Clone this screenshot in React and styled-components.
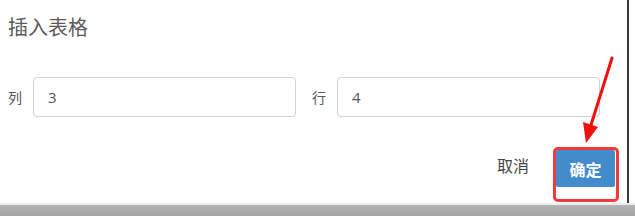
import React from 'react'
import styled, { createGlobalStyle } from 'styled-components'

const Global = createGlobalStyle`
  html, body {
    margin: 0;
    padding: 0;
    background: #fff;
  }
  body {
    font-family: "Open Sans", "Noto Sans CJK SC", sans-serif;
    color: #555;
  }
`

const Frame = styled.div`
  position: relative;
  width: 635px;
  height: 216px;
  display: flex;
  flex-direction: column;
  overflow: hidden;
`

const Dialog = styled.div`
  width: 629px;
  flex: 1;
  border-right: 2px solid #3a3a3a;
  display: flex;
  flex-direction: column;
  box-sizing: border-box;
`

const Header = styled.div`
  height: 52px;
  padding-left: 8px;
  display: flex;
  align-items: center;
`

const Title = styled.h4`
  margin: 0;
  font-family: "Noto Sans CJK SC", sans-serif;
  font-size: 20px;
  font-weight: 400;
  color: #5a5a5a;
`

const Body = styled.div`
  margin-top: 25px;
  padding-left: 8px;
  display: flex;
  gap: 16px;
`

const Field = styled.label`
  display: flex;
  align-items: center;
  gap: 11px;
`

const Label = styled.span`
  font-family: "Noto Sans CJK SC", sans-serif;
  font-size: 14px;
  color: #555;
`

const Input = styled.input`
  width: 263px;
  height: 40px;
  box-sizing: border-box;
  border: 1px solid #d2d2d2;
  border-radius: 4px;
  padding: 0 14px;
  font-family: "Open Sans", sans-serif;
  font-size: 15px;
  color: #555;
  outline: none;
`

const Footer = styled.div`
  margin-top: 33px;
  padding-right: 12px;
  display: flex;
  justify-content: flex-end;
  align-items: flex-start;
  gap: 27px;
`

const Button = styled.button`
  height: 37px;
  width: ${p => (p.$primary ? '59px' : 'auto')};
  border: none;
  border-radius: 2px;
  font-family: "Noto Sans CJK SC", sans-serif;
  font-size: 16px;
  line-height: 1;
  cursor: pointer;
  padding: 0;
  padding-top: ${p => (p.$primary ? '0' : '0')};
  margin-top: ${p => (p.$primary ? '0' : '-4px')};
  background: ${p => (p.$primary ? '#438bcb' : 'transparent')};
  color: ${p => (p.$primary ? '#fff' : '#444')};
  font-weight: ${p => (p.$primary ? 700 : 400)};
`

const BottomBar = styled.div`
  height: 11px;
  background: linear-gradient(#b4b4b4, #a2a2a2);
  border-top: 2px solid #ececec;
`

const Highlight = styled.div`
  position: absolute;
  left: 553px;
  top: 147px;
  width: 66px;
  height: 55px;
  box-sizing: border-box;
  border: 3px solid #ee3b3b;
  border-radius: 5px;
  pointer-events: none;
`

const Arrow = styled.svg`
  position: absolute;
  left: 0;
  top: 0;
  pointer-events: none;
`

export default function App() {
  return (
    <Frame>
      <Global />
      <Dialog>
        <Header>
          <Title>插入表格</Title>
        </Header>
        <Body>
          <Field>
            <Label>列</Label>
            <Input defaultValue="3" />
          </Field>
          <Field>
            <Label>行</Label>
            <Input defaultValue="4" />
          </Field>
        </Body>
        <Footer>
          <Button>取消</Button>
          <Button $primary>确定</Button>
        </Footer>
      </Dialog>
      <BottomBar />
      <Highlight />
      <Arrow width="635" height="216" viewBox="0 0 635 216">
        <line x1="612" y1="58" x2="591" y2="125" stroke="#f01010" strokeWidth="3" strokeLinecap="round" />
        <polygon points="583,122 598,127 586,143" fill="#f01010" />
      </Arrow>
    </Frame>
  )
}
